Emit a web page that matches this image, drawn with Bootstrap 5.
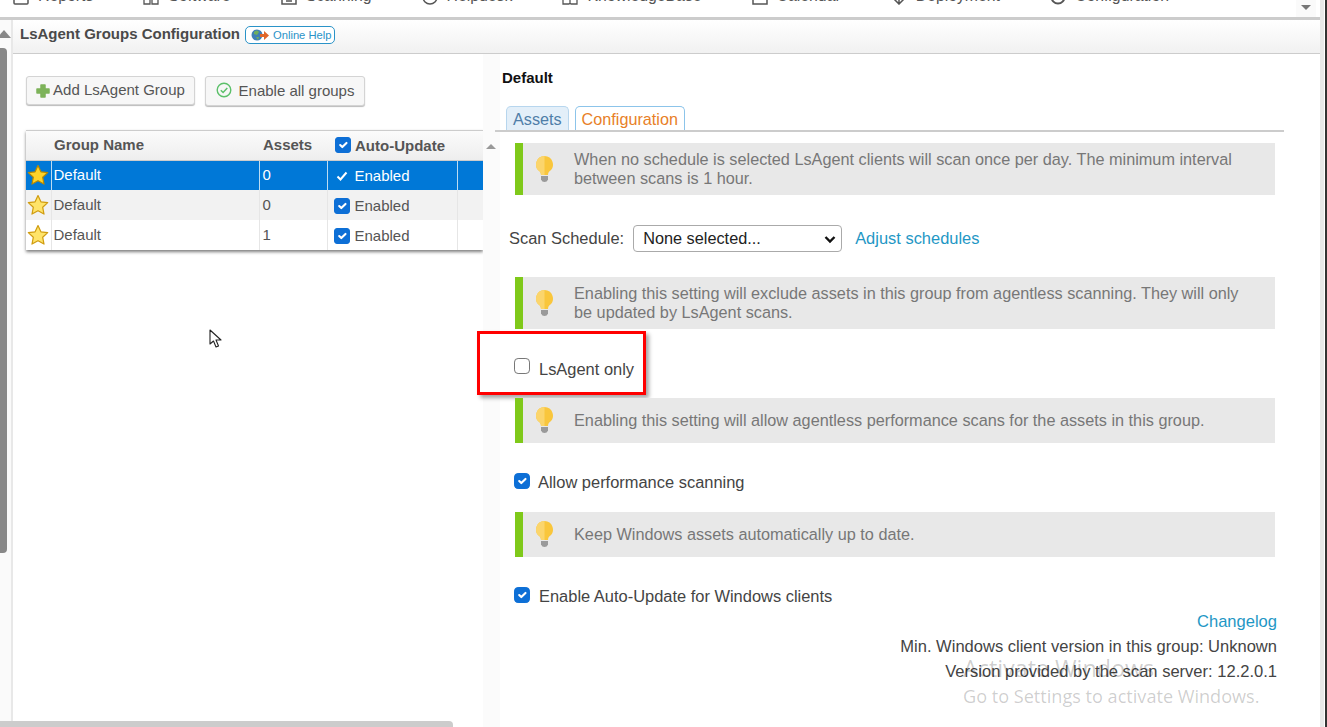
<!DOCTYPE html>
<html lang="en">
<head>
<meta charset="utf-8">
<title>LsAgent Groups Configuration</title>
<link href="https://cdn.jsdelivr.net/npm/bootstrap@5.3.0/dist/css/bootstrap.min.css" rel="stylesheet">
<style>
html,body{height:727px;overflow:hidden;background:#fff}
body{font-family:"Liberation Sans",Arial,sans-serif;font-size:16.45px;color:#444;position:relative}
.shell{height:727px}
.page-main{width:1320px;flex:none}
.edge-strip{width:7px;flex:none;background:linear-gradient(90deg,#e8e8e8 0 4px,#fff 4px 5px,#333 5px)}
.top-strip{height:17px;overflow:hidden;padding-left:13px;gap:50px;font-size:15.8px;color:#555;padding-bottom:13px}
.top-item{gap:9px;flex:none;line-height:16px}
.top-item svg{flex:none;width:16px;height:16px;margin-bottom:-1px}
.top-down{position:absolute;right:4px;top:0;width:20px;height:17px;background:#fafafa;display:flex;justify-content:center;padding-top:5px}
.tri-down{width:0;height:0;border:5px solid transparent;border-top:5px solid #777;border-bottom:0}
.tri-up{width:0;height:0;border:5.5px solid transparent;border-bottom:5px solid #999;border-top:0}
.top-rule{height:3px;background:#ccc;flex:none}
.rail{width:11px;flex:none;background:#fafafa;padding-top:10px}
.rail-arrow{margin-left:-3px;border-width:7px;border-bottom-width:8px;border-bottom-color:#888}
.rail-thumb{width:7px;height:505px;background:#888;border-radius:0 4px 4px 0;margin-top:10px}
.rail-line{width:2px;flex:none;background:#e8e8e8}
.title-bar{height:34px;background:linear-gradient(#fff,#f1f1f1);border-bottom:1px solid #ccc;padding:0 0 5px 7px;gap:5px}
.title-text{font-size:15px;font-weight:700;color:#4a4a4a;margin:0}
.help-pill{height:18px;width:90px;border:1.5px solid #2a93c8;border-radius:5px;gap:3px;padding-left:4px;font-size:11.200px;color:#2a93c8;text-decoration:none;background:#fff;margin-top:2px}
.left-pane{width:470px;flex:none;padding-left:13px;padding-top:22px}
.tool-btn{--bs-btn-bg:#f7f7f7;--bs-btn-border-color:#d4d4d4;--bs-btn-color:#555;--bs-btn-padding-y:0;--bs-btn-padding-x:0;--bs-btn-font-size:15px;--bs-btn-border-radius:3px;height:29px;box-shadow:0 1px 1px #bbb;display:flex;align-items:center;justify-content:center}
.tool-row{gap:10px}
.btn-add{width:169px;gap:3px}
.btn-all{width:160px;height:30px;gap:7px}
.btn-all svg{margin-top:-3px}
.grid-wrap{margin-top:24px;width:457px;box-shadow:0 2px 3px rgba(0,0,0,.5);border-top:1px solid #ccc}
.grid-table{table-layout:fixed;width:457px;margin:0;font-size:15px;--bs-table-bg:transparent;--bs-table-border-color:transparent}
.grid-table th,.grid-table td{padding:0 0 0 3px;height:30px;vertical-align:middle;border:0;border-right:1px solid #e6e6e6;color:#555;box-shadow:none}
.grid-table td{font-size:15px}
.grid-table thead th{background:linear-gradient(#fbfbfb,#eee);border:0;border-bottom:1px solid #ccc;color:#555;height:29px;font-weight:700;padding-bottom:0}
.grid-table thead .head-num{padding-left:4px}
.grid-table tbody tr:nth-child(2) td{background:#f2f2f2}
.grid-table tbody tr.row-on td{background:#0078d7;color:#fff;border-right-color:#bcdcf2}
.grid-table .cell-star{padding:0;text-align:center;line-height:0}
.grid-table .cell-name{padding-left:2px}
.grid-table .cell-last{border-right:0}
.enabled-wrap{gap:4px;padding-left:5px;line-height:1}
.grid-table tbody .enabled-wrap{padding:1px 0 0 3px;gap:5px}
.enabled-wrap .form-check-input,.plain-check{width:16px;height:16px;margin:0;flex:none;border-radius:3px;border-color:#777;box-shadow:none}
.form-check-input:checked{background-color:#0d6fd6;border-color:#0d6fd6}
.white-tick{width:16px;height:16px;flex:none}
.side-strip{width:17px;flex:none;background:#fbfbfb;padding-top:90px;padding-left:3px}
.right-pane{width:820px;flex:none;min-width:0;background:#fff}
.pane-title{font-size:15px;font-weight:700;color:#111;margin:16px 0 0 2px;line-height:16px}
.tab-row{--bs-nav-tabs-border-width:0;margin:20px 0 0 6px;gap:6px;border:0;font-size:16.2px}
.tab-row .nav-link{height:24px;padding:0 6px;line-height:25px;border:1px solid #b7d6ee;border-bottom:0;border-radius:5px 5px 0 0;background:#e3eff9;color:#4f7ea8}
.tab-row .nav-link.active{background:#fff;border-color:#8cc4ea;color:#e87f27;border-bottom:0}
.tab-rule{height:2px;background:#ccc;width:789px;margin-left:-5px}
.hint-box{width:760px;margin-left:15px;min-height:45px;background:#e8e8e8;border-left:8px solid #7fc91a;padding:7px 20px 7px 12px;gap:20px;color:#777;font-size:16.25px;line-height:19px}
.hint-box svg{flex:none;width:19px;height:29px}
.hint-first{margin-top:11px}
.sched-row{margin:30px 0 25px 9px;height:27px;gap:9px}
.sched-select{width:209px;height:27px;padding:0 0 0 9px;font-size:16.3px;color:#222;border-color:#aaa;border-radius:4px;flex:none;background-position:right 5px center;background-size:12px 10px;background-image:url("data:image/svg+xml,%3csvg xmlns='http://www.w3.org/2000/svg' viewBox='0 0 12 10'%3e%3cpath fill='none' stroke='%23111' stroke-width='2.4' d='M1.500 3l4.500 4.500L10.500 3'/%3e%3c/svg%3e")}
.sched-link,.change-link{color:#1f97c5;text-decoration:none}
.sched-link{margin-left:4px}
.red-frame{width:169px;height:64px;margin:2px 0 3px -23px;border:3px solid #f00;box-shadow:3px 3px 4px rgba(0,0,0,.35);padding:12px 0 0 34px;gap:9px;color:#444;background:#fff}
.red-frame .plain-check{margin-top:-6px;border-color:#777}
.check-row{margin:29px 0 20px 14px;height:20px;gap:8px;line-height:20px;color:#444}
.check-row .plain-check{margin-top:-3px}
.check-row.last-check{margin-bottom:3px;gap:9px}
.meta-block{width:777px;text-align:right;line-height:25px;color:#444;font-size:16.55px}
.grid-cursor{position:absolute;left:209px;top:329px;width:14px;height:20px}
.hbar{position:absolute;left:0;bottom:0;width:453px;height:6px;background:#ccc;border-radius:0 4px 0 0}
.activate-mark{position:absolute;left:963px;top:654px;font-family:"Open Sans",sans-serif;font-size:23.300px;color:rgba(0,0,0,.2);line-height:28px;white-space:nowrap;pointer-events:none}
.activate-mark span{display:block;font-size:18.100px}
</style>
</head>
<body>
<div class="d-flex shell">
  <div class="page-main d-flex flex-column">
    <nav class="top-strip d-flex align-items-end position-relative">
      <div class="top-item d-flex align-items-end"><svg viewBox="0 0 16 16"><rect x="1" y="1" width="14" height="14" rx="1" fill="none" stroke="#555" stroke-width="1.500"/></svg>Reports</div>
      <div class="top-item d-flex align-items-end"><svg viewBox="0 0 16 16"><path d="M1 1h6v6H1zM9 1h6v6H9zM1 9h6v6H1zM9 9h6v6H9z" fill="none" stroke="#555" stroke-width="1.300"/></svg>Software</div>
      <div class="top-item d-flex align-items-end"><svg viewBox="0 0 16 16"><path d="M1 10v5h14v-5M5 12h6" fill="none" stroke="#555" stroke-width="1.500"/></svg>Scanning</div>
      <div class="top-item d-flex align-items-end"><svg viewBox="0 0 16 16"><circle cx="8" cy="8" r="7" fill="none" stroke="#555" stroke-width="1.500"/></svg>Helpdesk</div>
      <div class="top-item d-flex align-items-end"><svg viewBox="0 0 16 16"><path d="M1 3v12h6l1-1 1 1h6V3M8 3v11" fill="none" stroke="#555" stroke-width="1.300"/></svg>KnowledgeBase</div>
      <div class="top-item d-flex align-items-end"><svg viewBox="0 0 16 16"><rect x="1" y="2" width="14" height="13" fill="none" stroke="#555" stroke-width="1.500"/></svg>Calendar</div>
      <div class="top-item d-flex align-items-end"><svg viewBox="0 0 16 16"><path d="M1 8l7 7 7-7M8 2v12" fill="none" stroke="#555" stroke-width="1.500"/></svg>Deployment</div>
      <div class="top-item d-flex align-items-end"><svg viewBox="0 0 16 16"><circle cx="8" cy="8" r="6.500" fill="none" stroke="#555" stroke-width="2"/></svg>Configuration</div>
      <div class="top-down"><div class="tri-down"></div></div>
    </nav>
    <div class="top-rule"></div>
    <div class="d-flex flex-grow-1">
      <div class="rail"><div class="tri-up rail-arrow"></div><div class="rail-thumb"></div></div>
      <div class="rail-line"></div>
      <div class="flex-grow-1 d-flex flex-column">
        <header class="title-bar d-flex align-items-center">
          <h1 class="title-text">LsAgent Groups Configuration</h1>
          <a href="#" class="help-pill d-inline-flex align-items-center">
            <svg width="20" height="13" viewBox="0 0 18 13"><circle cx="6" cy="6" r="5.500" fill="#3f7fb5"/><path d="M3 3q3-3 5 0l-2 3-3-1zM5 8l3 0-1 3z" fill="#6fae5c"/><path d="M9 5h4V2l5 4.500L13 11V8H9z" fill="#e0672a"/></svg>
            Online Help
          </a>
        </header>
        <div class="d-flex flex-grow-1">
          <section class="left-pane">
            <div class="d-flex tool-row align-items-start">
              <button class="btn tool-btn btn-add" type="button">
                <svg width="14" height="14" viewBox="0 0 14 14"><path d="M5 1h4v4h4v4H9v4H5V9H1V5h4z" fill="#7db35a" stroke="#7db35a" stroke-width="1.500" stroke-linejoin="round"/></svg>
                Add LsAgent Group
              </button>
              <button class="btn tool-btn btn-all" type="button">
                <svg width="16" height="16" viewBox="0 0 16 16"><circle cx="8" cy="8" r="6.800" fill="none" stroke="#5cc06a" stroke-width="1.400"/><path d="M4.800 8.200l2.300 2.300 4.200-4.600" fill="none" stroke="#5cc06a" stroke-width="1.500"/></svg>
                Enable all groups
              </button>
            </div>
            <div class="grid-wrap">
              <table class="table grid-table">
                <colgroup><col style="width:25px"><col style="width:208px"><col style="width:68px"><col style="width:130px"><col style="width:26px"></colgroup>
                <thead>
                  <tr><th></th><th>Group Name</th><th class="head-num">Assets</th><th><div class="d-flex align-items-center enabled-wrap"><input class="form-check-input" type="checkbox" checked aria-label="All">Auto-Update</div></th><th></th></tr>
                </thead>
                <tbody>
                  <tr class="row-on">
                    <td class="cell-star"><svg width="22" height="22" viewBox="0 0 22 22"><path d="M11 1.500l2.900 6.300 6.800.8-5 4.700 1.300 6.800-6-3.400-6 3.400 1.300-6.800-5-4.700 6.800-.8z" fill="#ffd42a" stroke="#b98a00" stroke-width="1.200" stroke-linejoin="round"/></svg></td>
                    <td class="cell-name">Default</td><td>0</td>
                    <td><div class="d-flex align-items-center enabled-wrap"><svg class="white-tick" viewBox="0 0 16 16"><path d="M3.500 8.500l3 3 6-7" fill="none" stroke="#fff" stroke-width="2"/></svg>Enabled</div></td>
                    <td class="cell-last"></td>
                  </tr>
                  <tr>
                    <td class="cell-star"><svg width="22" height="22" viewBox="0 0 22 22"><path d="M11 1.500l2.900 6.300 6.800.8-5 4.700 1.300 6.800-6-3.400-6 3.400 1.300-6.800-5-4.700 6.800-.8z" fill="#ffe46a" stroke="#d09c10" stroke-width="1.200" stroke-linejoin="round"/></svg></td>
                    <td class="cell-name">Default</td><td>0</td>
                    <td><div class="d-flex align-items-center enabled-wrap"><input class="form-check-input" type="checkbox" checked aria-label="Enabled">Enabled</div></td>
                    <td class="cell-last"></td>
                  </tr>
                  <tr>
                    <td class="cell-star"><svg width="22" height="22" viewBox="0 0 22 22"><path d="M11 1.500l2.900 6.300 6.800.8-5 4.700 1.300 6.800-6-3.400-6 3.400 1.300-6.800-5-4.700 6.800-.8z" fill="#ffe46a" stroke="#d09c10" stroke-width="1.200" stroke-linejoin="round"/></svg></td>
                    <td class="cell-name">Default</td><td>1</td>
                    <td><div class="d-flex align-items-center enabled-wrap"><input class="form-check-input" type="checkbox" checked aria-label="Enabled">Enabled</div></td>
                    <td class="cell-last"></td>
                  </tr>
                </tbody>
              </table>
            </div>
          </section>
          <div class="side-strip"><div class="tri-up"></div></div>
          <section class="right-pane">
            <h2 class="pane-title">Default</h2>
            <ul class="nav nav-tabs tab-row">
              <li class="nav-item"><a class="nav-link" href="#">Assets</a></li>
              <li class="nav-item"><a class="nav-link active" href="#">Configuration</a></li>
            </ul>
            <div class="tab-rule"></div>
            <div class="hint-box hint-first d-flex align-items-center">
              <svg viewBox="0 0 19 29"><path d="M9.500 1a8.500 8.500 0 0 0-5 15.300c1 .9 1.300 2 1.500 3.700h7c.2-1.700.5-2.800 1.500-3.700A8.500 8.500 0 0 0 9.500 1z" fill="#f9c63c"/><path d="M9.500 1a8.500 8.500 0 0 0-5 15.300c1 .9 1.300 2 1.500 3.700h3.500z" fill="#fbd56c"/><path d="M6 21h7v3.500q-1 2.500-3.500 2.500T6 24.500z" fill="#9a9a9a"/></svg>
              <div>When no schedule is selected LsAgent clients will scan once per day. The minimum interval between scans is 1 hour.</div>
            </div>
            <div class="sched-row d-flex align-items-center">
              <label for="sched">Scan Schedule:</label>
              <select id="sched" class="form-select sched-select"><option>None selected...</option></select>
              <a href="#" class="sched-link">Adjust schedules</a>
            </div>
            <div class="hint-box d-flex align-items-center">
              <svg viewBox="0 0 19 29"><path d="M9.500 1a8.500 8.500 0 0 0-5 15.300c1 .9 1.300 2 1.500 3.700h7c.2-1.700.5-2.800 1.500-3.700A8.500 8.500 0 0 0 9.500 1z" fill="#f9c63c"/><path d="M9.500 1a8.500 8.500 0 0 0-5 15.300c1 .9 1.300 2 1.500 3.700h3.500z" fill="#fbd56c"/><path d="M6 21h7v3.500q-1 2.500-3.500 2.500T6 24.500z" fill="#9a9a9a"/></svg>
              <div>Enabling this setting will exclude assets in this group from agentless scanning. They will only be updated by LsAgent scans.</div>
            </div>
            <div class="red-frame d-flex align-items-center">
              <input class="form-check-input plain-check" type="checkbox" id="only">
              <label for="only">LsAgent only</label>
            </div>
            <div class="hint-box d-flex align-items-center">
              <svg viewBox="0 0 19 29"><path d="M9.500 1a8.500 8.500 0 0 0-5 15.300c1 .9 1.300 2 1.500 3.700h7c.2-1.700.5-2.800 1.500-3.700A8.500 8.500 0 0 0 9.500 1z" fill="#f9c63c"/><path d="M9.500 1a8.500 8.500 0 0 0-5 15.300c1 .9 1.300 2 1.500 3.700h3.500z" fill="#fbd56c"/><path d="M6 21h7v3.500q-1 2.500-3.500 2.500T6 24.500z" fill="#9a9a9a"/></svg>
              <div>Enabling this setting will allow agentless performance scans for the assets in this group.</div>
            </div>
            <div class="check-row d-flex align-items-center">
              <input class="form-check-input plain-check" type="checkbox" id="perf" checked>
              <label for="perf">Allow performance scanning</label>
            </div>
            <div class="hint-box d-flex align-items-center">
              <svg viewBox="0 0 19 29"><path d="M9.500 1a8.500 8.500 0 0 0-5 15.300c1 .9 1.300 2 1.500 3.700h7c.2-1.700.5-2.800 1.500-3.700A8.500 8.500 0 0 0 9.500 1z" fill="#f9c63c"/><path d="M9.500 1a8.500 8.500 0 0 0-5 15.300c1 .9 1.300 2 1.500 3.700h3.500z" fill="#fbd56c"/><path d="M6 21h7v3.500q-1 2.500-3.500 2.500T6 24.500z" fill="#9a9a9a"/></svg>
              <div>Keep Windows assets automatically up to date.</div>
            </div>
            <div class="check-row last-check d-flex align-items-center">
              <input class="form-check-input plain-check" type="checkbox" id="auto" checked>
              <label for="auto">Enable Auto-Update for Windows clients</label>
            </div>
            <div class="meta-block">
              <div><a href="#" class="change-link">Changelog</a></div>
              <div>Min. Windows client version in this group: Unknown</div>
              <div>Version provided by the scan server: 12.2.0.1</div>
            </div>
          </section>
        </div>
      </div>
    </div>
  </div>
  <div class="edge-strip"></div>
</div>
<svg class="grid-cursor" viewBox="0 0 14 20"><path d="M1 1v14l3.500-3 2.500 6 2.500-1-2.500-6h5z" fill="#fff" stroke="#222" stroke-width="1.100" stroke-linejoin="round"/></svg>
<div class="hbar"></div>
<div class="activate-mark">Activate Windows<span>Go to Settings to activate Windows.</span></div>
<script src="https://cdn.jsdelivr.net/npm/bootstrap@5.3.0/dist/js/bootstrap.bundle.min.js"></script>
</body>
</html>
